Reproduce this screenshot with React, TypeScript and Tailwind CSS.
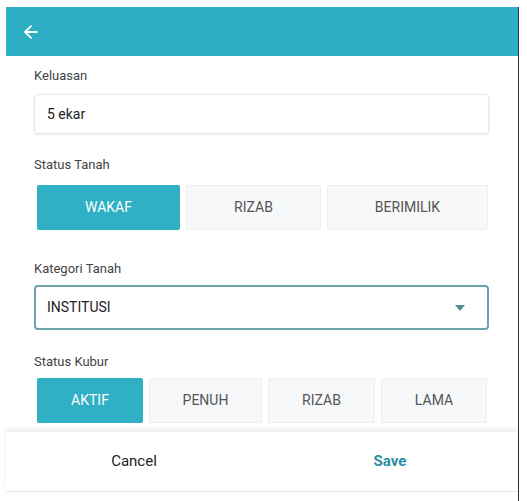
import { ArrowLeft } from "lucide-react";

const TANAH = [
  { label: "WAKAF", w: "w-[143px]" },
  { label: "RIZAB", w: "w-[135px]" },
  { label: "BERIMILIK", w: "w-[161px]" },
];

const KUBUR = [
  { label: "AKTIF", w: "w-[106px]" },
  { label: "PENUH", w: "w-[113px]" },
  { label: "RIZAB", w: "w-[107px]" },
  { label: "LAMA", w: "w-[106px]" },
];

function Segments({ items, active }: { items: { label: string; w: string }[]; active: string }) {
  return (
    <div className="flex gap-[6px] pl-[3px]">
      {items.map((it) => (
        <div
          key={it.label}
          className={`${it.w} h-[45px] flex items-center justify-center text-[14px] rounded-[2px] ${
            it.label === active
              ? "bg-[#2fb0c4] text-white"
              : "bg-[#f7f8f9] text-[#555] border border-[#eceeef]"
          }`}
        >
          {it.label}
        </div>
      ))}
    </div>
  );
}

export default function App() {
  return (
    <div className="w-[527px] h-[501px] bg-white pt-[7px] pl-[6px] flex" style={{ fontFamily: "Roboto, 'Liberation Sans', sans-serif" }}>
      <div className="w-[512px] flex flex-col">
        {/* ── Header ── */}
        <div className="h-[49px] bg-[#2eafc4] flex items-center pl-[15px]">
          <ArrowLeft size={20} strokeWidth={2.2} className="text-white" />
        </div>

        {/* ── Form ── */}
        <div className="pl-[28px] pr-[29px] pt-[12px] h-[376px] overflow-hidden">
          <p className="text-[13px] text-[#444] leading-[16px]">Keluasan</p>
          <div className="mt-[10px] h-[40px] border border-[#e6e8e9] rounded-[3px] shadow-[0_1px_3px_rgba(0,0,0,0.08)] flex items-center pl-[12px] text-[14px] text-[#222]">
            5 ekar
          </div>

          <p className="mt-[23px] text-[13px] text-[#444] leading-[16px]">Status Tanah</p>
          <div className="mt-[12px]">
            <Segments items={TANAH} active="WAKAF" />
          </div>

          <p className="mt-[31px] text-[13px] text-[#444] leading-[16px]">Kategori Tanah</p>
          <div className="mt-[8px] h-[45px] border-2 border-[#6aa4aa] rounded-[4px] flex items-center justify-between pl-[11px] pr-[22px] text-[14px] text-[#222]">
            <span>INSTITUSI</span>
            <svg width="10" height="6" viewBox="0 0 10 6">
              <path d="M0 0 L10 0 L5 6 Z" fill="#4e8e96" />
            </svg>
          </div>

          <p className="mt-[24px] text-[13px] text-[#444] leading-[16px]">Status Kubur</p>
          <div className="mt-[8px]">
            <Segments items={KUBUR} active="AKTIF" />
          </div>
        </div>

        {/* ── Footer ── */}
        <div className="h-[60px] border-b border-[#e3e5e6] shadow-[0_-3px_5px_rgba(0,0,0,0.07)] grid grid-cols-2 text-[15px]">
          <button className="text-[#222]">Cancel</button>
          <button className="text-[#2a8f9e] font-bold">Save</button>
        </div>
      </div>
      <div className="w-px h-full bg-[#333]" />
    </div>
  );
}
